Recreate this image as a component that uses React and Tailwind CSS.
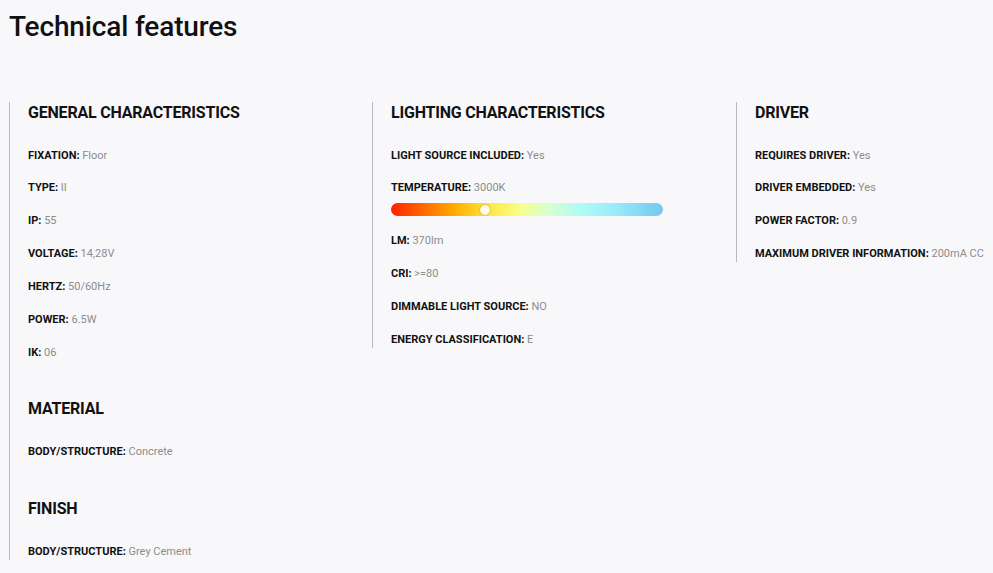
const general = [
  ["FIXATION", "Floor"],
  ["TYPE", "II"],
  ["IP", "55"],
  ["VOLTAGE", "14,28V"],
  ["HERTZ", "50/60Hz"],
  ["POWER", "6.5W"],
  ["IK", "06"],
];

const lighting = [
  ["LIGHT SOURCE INCLUDED", "Yes"],
  ["TEMPERATURE", "3000K", true],
  ["LM", "370lm"],
  ["CRI", ">=80"],
  ["DIMMABLE LIGHT SOURCE", "NO"],
  ["ENERGY CLASSIFICATION", "E"],
];

const driver = [
  ["REQUIRES DRIVER", "Yes"],
  ["DRIVER EMBEDDED", "Yes"],
  ["POWER FACTOR", "0.9"],
  ["MAXIMUM DRIVER INFORMATION", "200mA CC"],
];

function Heading({ children }) {
  return (
    <h3 className="text-[16px] leading-[22px] font-bold text-[#111] tracking-[-0.2px]">
      {children}
    </h3>
  );
}

function Item({ label, value, bar }) {
  return (
    <div>
      <p className="text-[11px] leading-4 tracking-[0px]">
        <span className="font-bold text-[#111]">{label}:</span>{" "}
        <span className="text-[#8c8c8c]">{value}</span>
      </p>
      {bar && (
        <div className="relative mt-[7px] h-[13px] w-[272px] rounded-full bg-[linear-gradient(90deg,#ff2200_0%,#ff6a00_12%,#ffb000_24%,#ffe840_36%,#f6ff90_48%,#d8ffd0_58%,#b0fbf6_70%,#98ecfa_82%,#74c8ee_100%)]">
          <div className="absolute left-[89px] top-[1.5px] h-[10px] w-[10px] rounded-full bg-[#fffbe8] shadow-[0_0_2px_rgba(0,0,0,0.35)]" />
        </div>
      )}
    </div>
  );
}

function Section({ title, items, first }) {
  return (
    <div className={first ? "" : "mt-[37.5px]"}>
      <Heading>{title}</Heading>
      <div className="mt-6 flex flex-col gap-[16.9px]">
        {items.map(([l, v, b]) => (
          <Item key={l} label={l} value={v} bar={b} />
        ))}
      </div>
    </div>
  );
}

export default function App() {
  return (
    <div
      className="min-h-screen bg-[#f8f8fa] overflow-hidden"
      style={{ fontFamily: "Roboto, 'Liberation Sans', sans-serif" }}
    >
      <div className="pl-[9px]">
        <h1 className="pt-[10px] text-[28px] leading-[34px] font-medium text-[#111] tracking-[-0.15px]">
          Technical features
        </h1>
        <div className="mt-[57.5px] grid grid-cols-[363px_364px_400px] items-start">
          <div className="border-l border-[#b8b8b8] pl-[18px]">
            <Section title="GENERAL CHARACTERISTICS" items={general} first />
            <Section title="MATERIAL" items={[["BODY/STRUCTURE", "Concrete"]]} />
            <Section title="FINISH" items={[["BODY/STRUCTURE", "Grey Cement"]]} />
          </div>
          <div className="border-l border-[#b8b8b8] pl-[18px]">
            <Section title="LIGHTING CHARACTERISTICS" items={lighting} first />
          </div>
          <div className="border-l border-[#b8b8b8] pl-[18px]">
            <Section title="DRIVER" items={driver} first />
          </div>
        </div>
      </div>
    </div>
  );
}
